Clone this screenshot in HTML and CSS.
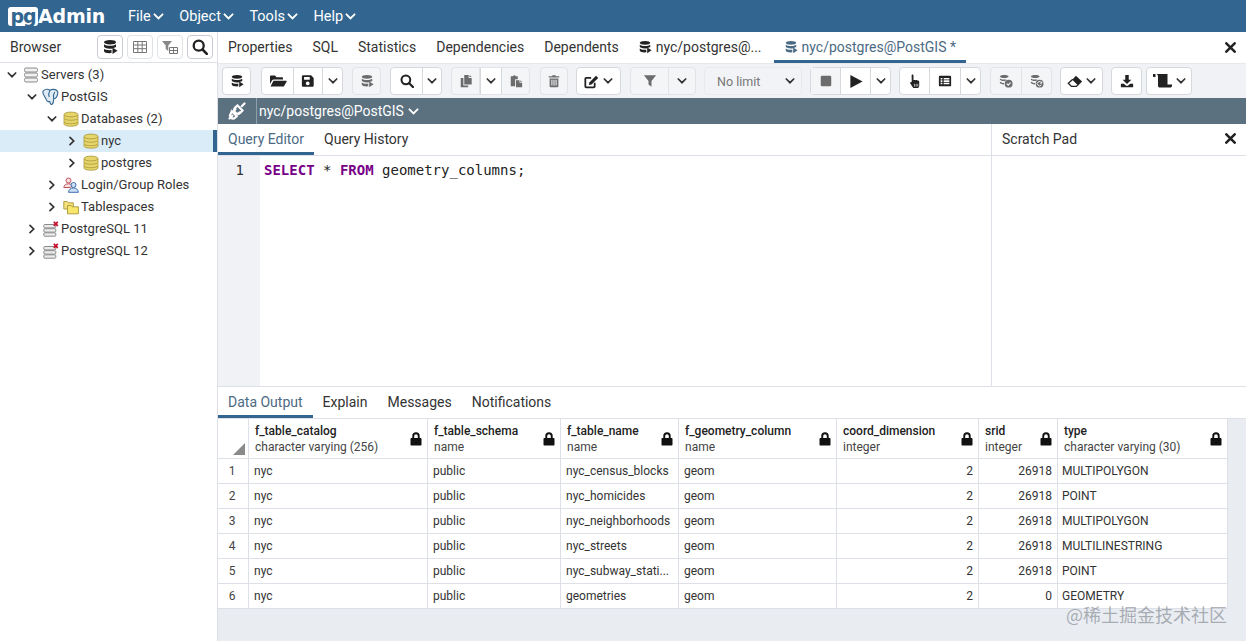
FILE: index.html
```html
<!DOCTYPE html>
<html lang="en">
<head>
<meta charset="utf-8">
<title>pgAdmin</title>
<link rel="stylesheet" href="styles.css">
</head>
<body>
<svg class="sprite" xmlns="http://www.w3.org/2000/svg">
  <symbol id="db-run" viewBox="0 0 16 16"><path d="M8 1C4.4 1 2 2 2 3.2s2.400 2.300 6 2.300 6-1 6-2.300S11.600 1 8 1zM2 5.300v2.200c0 1.200 2.400 2.200 6 2.200 1 0 1.600 0 2.400-.2L14 8V5.300C12.700 6.300 10.500 6.800 8 6.800S3.300 6.300 2 5.300zM2 9.700v2.200c0 1.300 2.400 2.300 6 2.300.5 0 1 0 1.500-.1V11c-3 .4-6.200 0-7.500-1.300z"/><path d="M10.500 8.500l5 3.200-5 3.300z"/></symbol>
  <symbol id="grid" viewBox="0 0 16 16"><path fill="none" stroke="currentColor" d="M1.500 2.500h13v11h-13zM1.500 6h13M1.500 9.700h13M5.800 2.500v11M10.200 2.500v11"/></symbol>
  <symbol id="filter-table" viewBox="0 0 16 16"><path fill="#888" d="M0 2h10L6.300 6.500V12L3.700 10V6.500z"/><path fill="none" stroke="#777" d="M7.500 8.500h8v6h-8zM7.500 11.500h8M11.500 8.500v6"/></symbol>
  <symbol id="search" viewBox="0 0 16 16"><circle cx="6.700" cy="6.700" r="5" fill="none" stroke="currentColor" stroke-width="2.300"/><path d="M10.500 10.500l4.300 4.300" stroke="currentColor" stroke-width="2.600" stroke-linecap="round"/></symbol>
  <symbol id="folder" viewBox="0 0 18 16"><path d="M1 3.500C1 3 1.500 2.500 2 2.500h4l1.500 1.700H13c.6 0 1 .4 1 1V6.500H5c-1 0-1.700.4-2.200 1.200L1 11z"/><path d="M4.500 7.700H17c.6 0 .9.500.6 1l-2.500 4.200c-.3.400-.7.600-1.200.6H1.500z"/></symbol>
  <symbol id="save" viewBox="0 0 16 16"><path fill-rule="evenodd" d="M2.500 1.500H11.500L14.500 4.500V13c0 .8-.7 1.500-1.500 1.500H2.500C1.700 14.500 1 13.800 1 13V3c0-.8.700-1.500 1.500-1.500zM3.500 3.500V6.500H10V3.500zM7.700 8.500a2.200 2.200 0 1 0 .01 0z"/></symbol>
  <symbol id="chev" viewBox="0 0 10 10"><path d="M1.300 3l3.700 3.700L8.700 3" fill="none" stroke="currentColor" stroke-width="1.700" stroke-linecap="round"/></symbol>
  <symbol id="chev-r" viewBox="0 0 10 10"><path d="M3 1.300L6.700 5 3 8.700" fill="none" stroke="currentColor" stroke-width="1.700" stroke-linecap="round"/></symbol>
  <symbol id="copy" viewBox="0 0 16 16"><path d="M6 1h5v3.500h3.500V12H6z"/><path d="M12 1l2.500 2.500H12zM2 4.500h3V13h5.500v2H2z"/></symbol>
  <symbol id="paste" viewBox="0 0 16 16"><path d="M2 2.500h2.500C5 1 7 1 7.500 2.500H10V6H7v8H2z"/><path d="M8 7h4v3h3v5H8zM13 7l2 2h-2z"/></symbol>
  <symbol id="trash" viewBox="0 0 16 16"><path fill-rule="evenodd" d="M2 2.500h3.700L6.300 1.300h3.400L10.300 2.500H14V4H2zM3 5h10v9c0 .6-.5 1-1 1H4c-.6 0-1-.4-1-1zM5 6.500V13h1.200V6.500zM7.400 6.500V13h1.200V6.500zM9.800 6.500V13H11V6.500z"/></symbol>
  <symbol id="edit" viewBox="0 0 18 16"><path fill="none" stroke="currentColor" stroke-width="2" d="M12 9.500V13.500a1 1 0 0 1-1 1H2.500a1 1 0 0 1-1-1V5a1 1 0 0 1 1-1H8"/><path d="M13.500 1.500l2.500 2.500-7.500 7.500-3 .5.500-3z"/></symbol>
  <symbol id="funnel" viewBox="0 0 16 16"><path d="M1 1.500h14L9.700 8v6.500L6.300 12V8z"/></symbol>
  <symbol id="stop" viewBox="0 0 16 16"><rect x="2" y="2" width="12" height="12" rx="1.500"/></symbol>
  <symbol id="play" viewBox="0 0 16 16"><path d="M2 1l13 7-13 7z"/></symbol>
  <symbol id="hand" viewBox="0 0 16 16"><path d="M5.200 .5c.7 0 1.200.5 1.200 1.200V6.500c.2-.1.500-.1 1-.1.400 0 .7.100 1 .3.300-.2.700-.3 1.100-.2.400 0 .7.200.9.400.7-.2 2.100 0 2.100 1.500v4c0 1.500-1 2.600-2.300 2.600H7.400c-.8 0-1.400-.3-1.800-1L3 10c-.6-1 .6-2 1.500-1.200l-.1-7.100c0-.6.300-1.200.8-1.200z"/><path d="M7.400 10.500v3M9.200 10.500v3M11 10.500v3" stroke="#fff" stroke-width=".7"/></symbol>
  <symbol id="list" viewBox="0 0 16 16"><path fill-rule="evenodd" d="M2 2h12c.6 0 1 .4 1 1v10c0 .6-.4 1-1 1H2c-.6 0-1-.4-1-1V3c0-.6.400-1 1-1zM3 4.500v1.800h2V4.500zM6.500 4.500v1.800H13V4.500zM3 7.200V9h2V7.200zM6.500 7.200V9H13V7.200zM3 10v1.700h2V10zM6.500 10v1.700H13V10z"/></symbol>
  <symbol id="commit" viewBox="0 0 16 16"><path d="M6 1C3.200 1 1 1.800 1 2.800S3.200 4.600 6 4.600s5-.8 5-1.800S8.800 1 6 1zM1 5v1.300c0 1 2.200 1.800 5 1.800.3 0 .7 0 1-.1L8.500 6.300C5 6.700 2.500 6 1 5zM1 8.500v1.600c0 1 2 1.800 4.700 1.800 0-.6 0-1.100.2-1.600C3.800 10.300 2 9.500 1 8.500z"/><circle cx="11" cy="11" r="4.500"/><path d="M8.800 11l1.700 1.700 2.700-2.900" fill="none" stroke="#f3f5f7" stroke-width="1.300"/></symbol>
  <symbol id="rollback" viewBox="0 0 16 16"><path d="M6 1C3.200 1 1 1.800 1 2.800S3.200 4.600 6 4.600s5-.8 5-1.800S8.800 1 6 1zM1 5v1.300c0 1 2.200 1.800 5 1.800.3 0 .7 0 1-.1L8.500 6.300C5 6.700 2.500 6 1 5zM1 8.500v1.600c0 1 2 1.800 4.700 1.800 0-.6 0-1.100.2-1.600C3.800 10.300 2 9.500 1 8.500z"/><circle cx="11" cy="11" r="4.500"/><path d="M13 12.500a2.500 2.500 0 1 1 .2-2.500M13.500 8.500v2h-2" fill="none" stroke="#f3f5f7" stroke-width="1.100"/></symbol>
  <symbol id="eraser" viewBox="0 0 18 16"><path d="M10 1.500l7 6.500-4.500 4.500L6 6z"/><path d="M6.500 5.500L1.500 10l3.500 3.500h5.500l2-2" fill="none" stroke="currentColor" stroke-width="1.500"/></symbol>
  <symbol id="download" viewBox="0 0 16 16"><path d="M6 1h4v5.500h3L8 11.500 3 6.500h3z"/><path d="M1 11h3.500L7 13.500h2L11.500 11H15v4H1z"/></symbol>
  <symbol id="scroll" viewBox="0 0 20 16"><path d="M0 1h2.500v3H0zM3.500 1H14.500v10.500h4.500v1.200c0 1.100-.8 1.800-2 1.800H7c-1.200 0-2-.7-2-1.800V3.500C5 2.500 4.500 1.500 3.500 1z"/></symbol>
  <symbol id="plug" viewBox="0 0 18 18"><g fill="none" stroke="currentColor" stroke-width="2.200" stroke-linecap="round"><path d="M1.500 16.500l2.800-2.800M13.800 4.200l2.700-2.700M9.500 3.500l5 5-2.200 2.200c-1.300 1.300-3.300 1.300-4.600.1l-.6-.6c-1.300-1.300-1.300-3.400 0-4.600z"/><path d="M3.800 9.200l5 5-1.700 1.500c-1.200 1-3 1-4.100-.1-1.200-1.200-1.200-3-.1-4.200zM6 8.500L7.500 7M10 12l1.500-1.500"/></g></symbol>
  <symbol id="lock" viewBox="0 0 12 14"><path fill-rule="evenodd" d="M2.300 6V4a3.700 3.700 0 0 1 7.400 0v2h.8c.6 0 1 .4 1 1v5.500c0 .6-.4 1-1 1h-9c-.6 0-1-.4-1-1V7c0-.6.400-1 1-1zM4.200 6h3.600V4a1.800 1.800 0 0 0-3.600 0z"/></symbol>
  <symbol id="x" viewBox="0 0 10 10"><path d="M1.200 1.200l7.600 7.600M8.800 1.200L1.200 8.800" fill="none" stroke="currentColor" stroke-width="2.300" stroke-linecap="round"/></symbol>
  <symbol id="servers" viewBox="0 0 16 16"><g fill="#f1f1f1" stroke="#8a8a8a"><rect x="1.500" y="1" width="13" height="4" rx="1.500"/><rect x="1.500" y="6" width="13" height="4" rx="1.500"/><rect x="1.500" y="11" width="13" height="4" rx="1.500"/></g></symbol>
  <symbol id="elephant" viewBox="0 0 16 16"><g fill="#dfeaf4" stroke="#33678f" stroke-width="1" stroke-linejoin="round"><path d="M2 2.500C4 .8 6.500 1 8 2c2-1.200 5-1 6.500.8 1 1.500 0 4-.8 5.500-.5 1-1.500 1.300-2.500 1.200 0 2 .1 4-1.300 5-1.200.5-2-.7-2-2.500-1.500.5-3-.5-3.300-2C3.500 7.500 .5 5 2 2.500z"/><path d="M8 2C6.800 4 6.500 6 7.300 8M11.200 9.500c-.6-2-.3-4 1-6"/></g></symbol>
  <symbol id="dbase" viewBox="0 0 16 16"><g fill="#e6d66a" stroke="#a8963a" stroke-width=".8"><path d="M1 11v2c0 1.300 3 2.200 7 2.200s7-.9 7-2.200v-2z"/><path d="M1 7.500v3c0 1.300 3 2.200 7 2.200s7-.9 7-2.200v-3z"/><path d="M1 4v3c0 1.300 3 2.200 7 2.200s7-.9 7-2.200V4z"/><ellipse cx="8" cy="3.500" rx="7" ry="2.400"/></g></symbol>
  <symbol id="roles" viewBox="0 0 16 16"><g fill="#f8dfe0" stroke="#c0545c"><circle cx="5.500" cy="3.500" r="2.500"/><path d="M.8 10.500c.3-2.500 2-3.700 4.700-3.700s3.800 1 4.200 2.200L7 10.500z"/></g><g fill="#cfe0f4" stroke="#3f6fb0"><circle cx="10.500" cy="8" r="2.500"/><path d="M5.500 15.300c.3-2.800 2.200-4.300 5-4.300s4.600 1.500 4.900 4.300z"/></g></symbol>
  <symbol id="tspace" viewBox="0 0 16 16"><g stroke="#a8963a" stroke-width=".9"><path fill="#f5e27a" d="M.8 2.500h3.500l1 1.300h5V10H.8z"/><path fill="#f7e76c" d="M4.500 6.500h3.700l1 1.300h6.200v7H4.500z"/></g></symbol>
  <symbol id="server-x" viewBox="0 0 16 16"><g fill="#ececec" stroke="#8a8a8a"><rect x=".8" y="3.500" width="12" height="3.400" rx="1"/><rect x=".8" y="7.700" width="12" height="3.400" rx="1"/><rect x=".8" y="11.800" width="12" height="3.400" rx="1"/></g><path d="M10.800.8l4 4M14.800.8l-4 4" stroke="#c8102e" stroke-width="1.800"/></symbol>
  <symbol id="tri" viewBox="0 0 12 12"><path d="M12 0v12H0z"/></symbol>
</svg>

<div class="app">
  <header class="topbar">
    <div class="logo"><span class="logo-pg">pg</span><span class="logo-admin">Admin</span></div>
    <nav class="menu">
      <span class="menu-item">File<svg class="chev-w"><use href="#chev"/></svg></span>
      <span class="menu-item">Object<svg class="chev-w"><use href="#chev"/></svg></span>
      <span class="menu-item">Tools<svg class="chev-w"><use href="#chev"/></svg></span>
      <span class="menu-item">Help<svg class="chev-w"><use href="#chev"/></svg></span>
    </nav>
  </header>

  <div class="workspace">
    <aside class="sidebar">
      <div class="side-head">
        <span class="side-title">Browser</span>
        <div class="side-tools">
          <span class="side-btn"><svg class="i16"><use href="#db-run"/></svg></span>
          <span class="side-btn off"><svg class="i16"><use href="#grid"/></svg></span>
          <span class="side-btn off"><svg class="i16"><use href="#filter-table"/></svg></span>
          <span class="side-btn"><svg class="i16"><use href="#search"/></svg></span>
        </div>
      </div>
      <div class="tree">
        <div class="node d0"><svg class="tw"><use href="#chev"/></svg><svg class="ti"><use href="#servers"/></svg>Servers (3)</div>
        <div class="node d1"><svg class="tw"><use href="#chev"/></svg><svg class="ti ti-lg"><use href="#elephant"/></svg>PostGIS</div>
        <div class="node d2"><svg class="tw"><use href="#chev"/></svg><svg class="ti"><use href="#dbase"/></svg>Databases (2)</div>
        <div class="node d3 sel"><svg class="tw"><use href="#chev-r"/></svg><svg class="ti"><use href="#dbase"/></svg>nyc</div>
        <div class="node d3"><svg class="tw"><use href="#chev-r"/></svg><svg class="ti"><use href="#dbase"/></svg>postgres</div>
        <div class="node d2"><svg class="tw"><use href="#chev-r"/></svg><svg class="ti"><use href="#roles"/></svg>Login/Group Roles</div>
        <div class="node d2"><svg class="tw"><use href="#chev-r"/></svg><svg class="ti"><use href="#tspace"/></svg>Tablespaces</div>
        <div class="node d1"><svg class="tw"><use href="#chev-r"/></svg><svg class="ti"><use href="#server-x"/></svg>PostgreSQL 11</div>
        <div class="node d1"><svg class="tw"><use href="#chev-r"/></svg><svg class="ti"><use href="#server-x"/></svg>PostgreSQL 12</div>
      </div>
    </aside>

    <main class="main">
      <div class="tabs main-tabs">
        <span class="tab">Properties</span>
        <span class="tab">SQL</span>
        <span class="tab">Statistics</span>
        <span class="tab">Dependencies</span>
        <span class="tab">Dependents</span>
        <span class="tab with-icon t-q1"><svg class="i14"><use href="#db-run"/></svg>nyc/postgres@...</span>
        <span class="tab with-icon active t-q2"><svg class="i14"><use href="#db-run"/></svg>nyc/postgres@PostGIS *</span>
        <svg class="close"><use href="#x"/></svg>
      </div>

      <div class="toolbar">
        <div class="grp"><span class="b w27"><svg class="i14"><use href="#db-run"/></svg></span></div>
        <div class="grp g10">
          <span class="b w32"><svg class="i17"><use href="#folder"/></svg></span>
          <span class="b w29"><svg class="i14"><use href="#save"/></svg></span>
          <span class="b w19"><svg class="cv"><use href="#chev"/></svg></span>
        </div>
        <div class="grp off"><span class="b w27"><svg class="i14"><use href="#db-run"/></svg></span></div>
        <div class="grp">
          <span class="b w32"><svg class="i14"><use href="#search"/></svg></span>
          <span class="b w18"><svg class="cv"><use href="#chev"/></svg></span>
        </div>
        <div class="grp off">
          <span class="b w28"><svg class="i14"><use href="#copy"/></svg></span>
          <span class="b w22 on"><svg class="cv"><use href="#chev"/></svg></span>
          <span class="b w27"><svg class="i14"><use href="#paste"/></svg></span>
        </div>
        <div class="grp off g10"><span class="b w26"><svg class="i14"><use href="#trash"/></svg></span></div>
        <div class="grp g8"><span class="b w43"><svg class="i15"><use href="#edit"/></svg><svg class="cv"><use href="#chev"/></svg></span></div>
        <div class="grp off">
          <span class="b w38"><svg class="i14"><use href="#funnel"/></svg></span>
          <span class="b w26"><svg class="cv"><use href="#chev"/></svg></span>
        </div>
        <div class="limit off g8">No limit<svg class="cv dark"><use href="#chev"/></svg></div>
        <div class="grp g8">
          <span class="b w30 dim"><svg class="i14"><use href="#stop"/></svg></span>
          <span class="b w30"><svg class="i15"><use href="#play"/></svg></span>
          <span class="b w19"><svg class="cv"><use href="#chev"/></svg></span>
        </div>
        <div class="grp g8">
          <span class="b w30"><svg class="i15"><use href="#hand"/></svg></span>
          <span class="b w31"><svg class="i14"><use href="#list"/></svg></span>
          <span class="b w19"><svg class="cv"><use href="#chev"/></svg></span>
        </div>
        <div class="grp off">
          <span class="b w31"><svg class="i14"><use href="#commit"/></svg></span>
          <span class="b w29"><svg class="i14"><use href="#rollback"/></svg></span>
        </div>
        <div class="grp g8"><span class="b w41"><svg class="i15"><use href="#eraser"/></svg><svg class="cv"><use href="#chev"/></svg></span></div>
        <div class="grp g8"><span class="b w29"><svg class="i14"><use href="#download"/></svg></span></div>
        <div class="grp g4"><span class="b w44"><svg class="i20"><use href="#scroll"/></svg><svg class="cv"><use href="#chev"/></svg></span></div>
      </div>

      <div class="conn">
        <span class="conn-ic"><svg class="i18"><use href="#plug"/></svg></span>
        <span class="conn-name">nyc/postgres@PostGIS<svg class="chev-w"><use href="#chev"/></svg></span>
      </div>

      <div class="query-row">
        <section class="query-left">
          <div class="tabs sub-tabs">
            <span class="tab active">Query Editor</span>
            <span class="tab">Query History</span>
          </div>
          <div class="editor">
            <div class="gutter">1</div>
            <div class="code"><span class="kw">SELECT</span> * <span class="kw">FROM</span> geometry_columns;</div>
          </div>
        </section>
        <section class="scratch">
          <div class="scratch-head"><span>Scratch Pad</span><svg class="close"><use href="#x"/></svg></div>
        </section>
      </div>

      <div class="tabs out-tabs">
        <span class="tab active">Data Output</span>
        <span class="tab">Explain</span>
        <span class="tab">Messages</span>
        <span class="tab">Notifications</span>
      </div>

      <div class="results">
        <table class="grid">
          <colgroup>
            <col class="c0"><col class="c1"><col class="c2"><col class="c3"><col class="c4"><col class="c5"><col class="c6"><col class="c7">
          </colgroup>
          <thead>
            <tr>
              <th class="corner"><svg class="tri"><use href="#tri"/></svg></th>
              <th><div class="hc"><div><b>f_table_catalog</b><span>character varying (256)</span></div><svg class="lock"><use href="#lock"/></svg></div></th>
              <th><div class="hc"><div><b>f_table_schema</b><span>name</span></div><svg class="lock"><use href="#lock"/></svg></div></th>
              <th><div class="hc"><div><b>f_table_name</b><span>name</span></div><svg class="lock"><use href="#lock"/></svg></div></th>
              <th><div class="hc"><div><b>f_geometry_column</b><span>name</span></div><svg class="lock"><use href="#lock"/></svg></div></th>
              <th><div class="hc"><div><b>coord_dimension</b><span>integer</span></div><svg class="lock"><use href="#lock"/></svg></div></th>
              <th><div class="hc"><div><b>srid</b><span>integer</span></div><svg class="lock"><use href="#lock"/></svg></div></th>
              <th><div class="hc"><div><b>type</b><span>character varying (30)</span></div><svg class="lock"><use href="#lock"/></svg></div></th>
            </tr>
          </thead>
          <tbody>
            <tr><td class="rn">1</td><td>nyc</td><td>public</td><td>nyc_census_blocks</td><td>geom</td><td class="num">2</td><td class="num">26918</td><td class="ty">MULTIPOLYGON</td></tr>
            <tr><td class="rn">2</td><td>nyc</td><td>public</td><td>nyc_homicides</td><td>geom</td><td class="num">2</td><td class="num">26918</td><td class="ty">POINT</td></tr>
            <tr><td class="rn">3</td><td>nyc</td><td>public</td><td>nyc_neighborhoods</td><td>geom</td><td class="num">2</td><td class="num">26918</td><td class="ty">MULTIPOLYGON</td></tr>
            <tr><td class="rn">4</td><td>nyc</td><td>public</td><td>nyc_streets</td><td>geom</td><td class="num">2</td><td class="num">26918</td><td class="ty">MULTILINESTRING</td></tr>
            <tr><td class="rn">5</td><td>nyc</td><td>public</td><td>nyc_subway_stati...</td><td>geom</td><td class="num">2</td><td class="num">26918</td><td class="ty">POINT</td></tr>
            <tr><td class="rn">6</td><td>nyc</td><td>public</td><td>geometries</td><td>geom</td><td class="num">2</td><td class="num">0</td><td class="ty">GEOMETRY</td></tr>
          </tbody>
        </table>
      </div>
    </main>
  </div>
  <div class="watermark">@稀土掘金技术社区</div>
</div>
</body>
</html>
```

FILE: styles.css
```css
* { box-sizing: border-box; }
html, body { margin: 0; padding: 0; background: #fff; }
body { font-family: Roboto, "Liberation Sans", sans-serif; color: #222; overflow: hidden; height: 644px; }
.sprite { display: none; }
svg { display: block; flex: none; }

.app { position: relative; height: 641px; display: flex; flex-direction: column; }

.topbar { height: 32px; flex: none; background: #326690; display: flex; align-items: center; color: #fff; }
.logo { display: flex; align-items: center; margin-left: 8px; width: 120px; font-weight: 700; }
.logo-pg { background: #fff; color: #326690; border-radius: 3px; font-family: "DejaVu Sans", sans-serif; font-size: 19px; line-height: 19px; height: 19px; width: 30px; text-align: center; letter-spacing: -1px; }
.logo-admin { font-family: "DejaVu Sans", sans-serif; font-size: 19px; letter-spacing: -.2px; }
.menu { display: flex; gap: 15.500px; font-size: 14.500px; }
.menu-item { display: flex; align-items: center; gap: 2px; }
.chev-w { width: 11px; height: 11px; color: #fff; }

.workspace { flex: 1; display: flex; min-height: 0; }

.sidebar { width: 218px; flex: none; border-right: 1px solid #dde0e6; display: flex; flex-direction: column; }
.side-head { height: 31px; flex: none; display: flex; align-items: center; justify-content: space-between; padding: 0 4px 0 10px; border-bottom: 1px solid #dde0e6; background: #fff; }
.side-title { font-size: 14px; color: #333; }
.side-tools { display: flex; gap: 4px; }
.side-btn { width: 26px; height: 24px; border: 1px solid #c8ccd2; border-radius: 4px; display: flex; align-items: center; justify-content: center; color: #222; }
.side-btn.off { color: #777; border-color: #dfe2e6; }
.i16 { width: 16px; height: 16px; fill: currentColor; }

.tree { padding-top: 1px; font-size: 13px; letter-spacing: .03px; color: #333; }
.node { height: 22px; padding-bottom: 1px; display: flex; align-items: center; }
.d0 { padding-left: 7px; }
.d1 { padding-left: 27px; }
.d2 { padding-left: 47px; }
.d3 { padding-left: 67px; }
.sel { background: #d9ecf8; border-right: 4px solid #326690; }
.tw { width: 10px; height: 10px; color: #333; margin-right: 6px; }
.ti { width: 16px; height: 16px; margin-right: 2px; }
.ti-lg { width: 18px; height: 18px; margin-left: -2px; }

.main { flex: 1; min-width: 0; display: flex; flex-direction: column; }

.tabs { display: flex; font-size: 14px; color: #333; background: #fff; }
.tab { display: flex; align-items: center; white-space: nowrap; padding-top: 2px; border-bottom: 3px solid transparent; }
.tab.active { color: #4b6a83; border-bottom-color: #326690; }
.main-tabs { height: 31px; flex: none; padding-left: 10px; gap: 20px; }
.main-tabs .active { padding-left: 10px; width: 192px; }
.with-icon svg { margin-right: 4px; fill: #222; }
.t-q1 { margin-left: -1px; margin-right: -8px; }
.active.with-icon svg { fill: #4b6a83; }
.close { width: 11px; height: 11px; color: #222; margin-left: auto; margin-right: 10px; align-self: center; }

.toolbar { height: 35px; flex: none; display: flex; align-items: center; gap: 9px; padding: 0 0 0 4px; background: #f0f2f5; border-top: 1px solid #e6e8ec; }
.g10 { margin-left: 1px; }
.g8 { margin-left: -1px; }
.g4 { margin-left: -5px; }
.grp { display: flex; height: 28px; background: #fff; border: 1px solid #d5d8dd; border-radius: 4px; color: #222; }
.grp.off { background: #f3f5f7; border-color: #e0e3e8; color: #6c6c6c; }
.b { display: flex; align-items: center; justify-content: center; gap: 3px; height: 100%; border-right: 1px solid #d5d8dd; fill: currentColor; }
.grp.off .b { border-right-color: #e0e3e8; }
.b:last-child { border-right: 0; }
.grp.off .b.on { background: #fff; color: #333; border-left: 1px solid #d5d8dd; border-right: 1px solid #d5d8dd; }
.b.dim { color: #6c6c6c; background: #f3f5f7; }
.w18 { width: 18px; } .w19 { width: 19px; } .w22 { width: 22px; } .w26 { width: 26px; } .w27 { width: 27px; } .w28 { width: 28px; } .w29 { width: 29px; }
.w30 { width: 30px; } .w31 { width: 31px; } .w32 { width: 32px; } .w38 { width: 38px; } .w41 { width: 41px; } .w43 { width: 43px; } .w44 { width: 44px; }
.i14 { width: 14px; height: 14px; }
.i15 { width: 16px; height: 15px; }
.i17 { width: 18px; height: 16px; }
.i18 { width: 18px; height: 18px; }
.i20 { width: 20px; height: 16px; }
.cv { width: 10px; height: 10px; color: #333; }
.limit { width: 98px; height: 28px; display: flex; align-items: center; justify-content: space-between; padding: 0 6px 0 12px; font-size: 12.500px; color: #777; background: #f1f3f6; border: 1px solid #e8eaee; border-radius: 4px; }

.conn { height: 26px; flex: none; background: #5b7180; display: flex; align-items: stretch; color: #fff; }
.conn-ic { width: 39px; border-right: 1px solid #8ea0ac; display: flex; align-items: center; justify-content: center; }
.conn-name { display: flex; align-items: center; gap: 4px; padding-left: 2px; font-size: 14px; }

.query-row { height: 263px; flex: none; display: flex; border-bottom: 1px solid #dde0e6; }
.query-left { flex: 1; display: flex; flex-direction: column; min-width: 0; }
.sub-tabs { height: 32px; flex: none; border-bottom: 1px solid #dde0e6; }
.sub-tabs .tab, .out-tabs .tab { padding-left: 10px; padding-right: 10px; }
.editor { flex: 1; display: flex; }
.gutter { width: 42px; background: #f0f2f5; text-align: right; padding: 5px 16px 0 0; font: 14px/18px "DejaVu Sans Mono", monospace; color: #333; }
.code { padding: 5px 0 0 4px; font: 14px/18px "DejaVu Sans Mono", monospace; color: #222; }
.kw { color: #770088; font-weight: 700; }
.scratch { width: 255px; flex: none; border-left: 1px solid #dde0e6; }
.scratch-head { height: 32px; display: flex; align-items: center; padding: 0 0 2px 10px; font-size: 14px; color: #333; border-bottom: 1px solid #dde0e6; }

.out-tabs { height: 32px; flex: none; border-bottom: 1px solid #dde0e6; }

.results { flex: 1; min-height: 0; background: #e9edf2; }
.grid { border-collapse: separate; border-spacing: 0; table-layout: fixed; width: 1010px; background: #fff; font-size: 12px; color: #333; }
.c0 { width: 31px; } .c1 { width: 179px; } .c2 { width: 133px; } .c3 { width: 118px; } .c4 { width: 158px; } .c5 { width: 142px; } .c6 { width: 79px; } .c7 { width: 170px; }
.grid th, .grid td { border-right: 1px solid #dde0e6; border-bottom: 1px solid #dde0e6; padding: 0; font-weight: 400; white-space: nowrap; overflow: hidden; }
.grid th { height: 40px; text-align: left; padding: 0 4px 0 6px; }
.grid td { height: 25px; padding: 0 4px 0 5px; }
.grid .corner { padding: 0; vertical-align: bottom; }
.tri { width: 14px; height: 12px; fill: #8a8a8a; margin: 0 0 3px 14px; }
.hc { display: flex; align-items: center; justify-content: space-between; }
.hc b { display: block; font-weight: 500; line-height: 16px; color: #222; }
.hc span { display: block; line-height: 16px; color: #444; }
.lock { width: 12px; height: 14px; fill: #111; margin-right: 1px; }
.grid .rn { text-align: center; padding: 0 2px 0 0; color: #444; }
.grid .num { text-align: right; padding-right: 5px; }
.grid .ty { padding-left: 4px; }

.watermark { position: absolute; right: 19px; bottom: 15px; font-family: "Noto Sans CJK SC", sans-serif; font-size: 18px; line-height: 24px; color: rgba(110, 115, 125, .55); }
```
